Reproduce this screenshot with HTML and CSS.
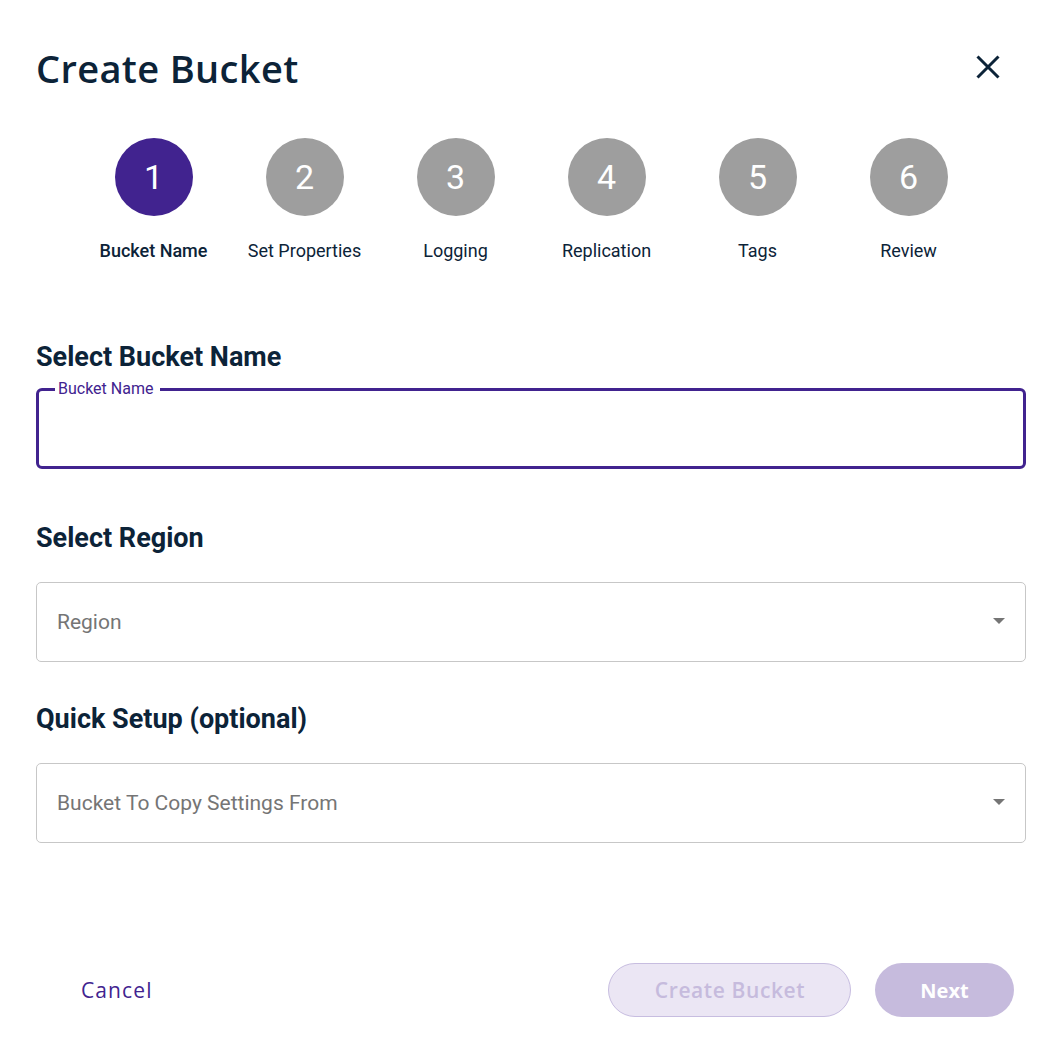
FILE: index.html
```html
<!DOCTYPE html>
<html>
<head>
<meta charset="utf-8">
<link rel="stylesheet" href="styles.css">
</head>
<body>
<div class="dialog">
  <header class="top">
    <h1 class="title">Create Bucket</h1>
    <button class="close" aria-label="Close">
      <svg width="24" height="24" viewBox="0 0 24 24"><path d="M1.5 1.5 L22.5 22.5 M22.5 1.5 L1.5 22.5" stroke="#0c2338" stroke-width="3" fill="none"/></svg>
    </button>
  </header>

  <ol class="steps">
    <li class="step active"><span class="circle">1</span><span class="label">Bucket Name</span></li>
    <li class="step"><span class="circle">2</span><span class="label">Set Properties</span></li>
    <li class="step"><span class="circle">3</span><span class="label">Logging</span></li>
    <li class="step"><span class="circle">4</span><span class="label">Replication</span></li>
    <li class="step"><span class="circle">5</span><span class="label">Tags</span></li>
    <li class="step"><span class="circle">6</span><span class="label">Review</span></li>
  </ol>

  <section class="section first">
    <h2 class="heading">Select Bucket Name</h2>
    <fieldset class="field focused">
      <legend>Bucket Name</legend>
    </fieldset>
  </section>

  <section class="section second">
    <h2 class="heading">Select Region</h2>
    <div class="select"><span>Region</span><span class="caret"></span></div>
  </section>

  <section class="section">
    <h2 class="heading">Quick Setup (optional)</h2>
    <div class="select"><span>Bucket To Copy Settings From</span><span class="caret"></span></div>
  </section>

  <footer class="actions">
    <button class="btn-text">Cancel</button>
    <div class="right">
      <button class="btn-outline">Create Bucket</button>
      <button class="btn-fill">Next</button>
    </div>
  </footer>
</div>
</body>
</html>
```

FILE: styles.css
```css
* { box-sizing: border-box; }
html, body { margin: 0; padding: 0; background: #fff; }
body { font-family: Roboto, "Noto Sans", sans-serif; color: #0c2338; }

.dialog { width: 1060px; height: 1048px; padding: 0 34px 0 36px; display: flex; flex-direction: column; }

.top { display: flex; justify-content: space-between; align-items: center; height: 136px; }
.title { margin: 0; font-family: "Open Sans", "Noto Sans", sans-serif; font-weight: 600; font-size: 38px; letter-spacing: 0.35px; color: #0c2338; }
.close { background: none; border: 0; padding: 0; margin-right: 26px; margin-top: -2px; width: 24px; height: 24px; display: flex; }

.steps { list-style: none; margin: 0; padding: 0; display: flex; justify-content: center; margin-left: -35px; margin-right: -35px; margin-top: 2px; }
.step { width: 151px; display: flex; flex-direction: column; align-items: center; }
.circle { width: 78px; height: 78px; border-radius: 50%; background: #9e9e9e; color: #fff; display: flex; align-items: center; justify-content: center; font-size: 34px; font-weight: 400; }
.step.active .circle { background: #41238f; }
.label { margin-top: 25px; font-size: 18px; color: #0c2338; line-height: 20px; }
.step.active .label { font-weight: 500; }

.section { margin-top: 41px; }
.section.first { margin-top: 80px; }
.section.second { margin-top: 53px; }
.heading { margin: 0; font-size: 27px; font-weight: 700; line-height: 32px; color: #0c2338; }

.field { margin: 0; margin-top: 8px; height: 88px; border: 3px solid #41238f; border-radius: 6px; padding: 0 18px; }
.field legend { font-size: 16px; color: #41238f; padding: 0 7px 0 3px; margin-left: -2px; line-height: 16px; }

.select { margin-top: 28px; height: 80px; border: 1px solid #c7c7c7; border-radius: 5px; display: flex; align-items: center; justify-content: space-between; padding: 0 20px 0 20px; font-size: 21px; color: #757575; }
.caret { width: 0; height: 0; border-left: 6px solid transparent; border-right: 6px solid transparent; border-top: 6px solid #757575; margin-top: -2px; }

.actions { margin-top: auto; margin-bottom: 31px; display: flex; justify-content: space-between; align-items: center; }
.btn-text { background: none; border: 0; font-family: "Open Sans", "Noto Sans", sans-serif; font-size: 21px; font-weight: 500; letter-spacing: 1.1px; color: #41238f; padding: 0; margin-left: 45px; }
.right { display: flex; gap: 24px; margin-right: 12px; }
.btn-outline { height: 54px; width: 243px; border-radius: 27px; background: #ebe6f4; border: 1px solid #c7bde0; color: #c6bbdd; font-family: "Open Sans", "Noto Sans", sans-serif; font-size: 21px; font-weight: 600; letter-spacing: 0.6px; padding-right: 5px; }
.btn-fill { height: 54px; width: 139px; border-radius: 27px; background: #c6bbdd; border: 0; color: #fff; font-family: "Open Sans", "Noto Sans", sans-serif; font-size: 20px; font-weight: 700; }
```
